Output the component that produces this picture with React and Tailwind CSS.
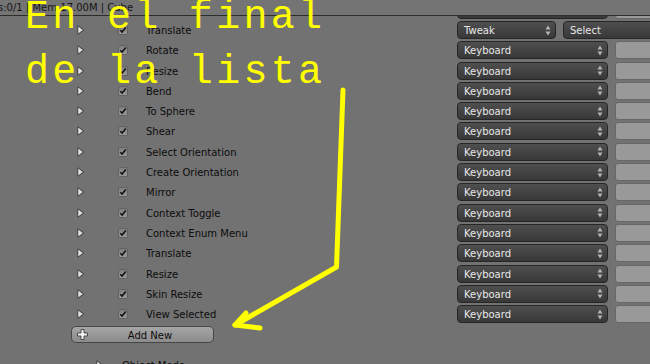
const rows = [
  { label: '', hidden: true },
  { label: 'Translate', tweak: true },
  { label: 'Rotate' },
  { label: 'Resize' },
  { label: 'Bend' },
  { label: 'To Sphere' },
  { label: 'Shear' },
  { label: 'Select Orientation' },
  { label: 'Create Orientation', mark: true },
  { label: 'Mirror' },
  { label: 'Context Toggle' },
  { label: 'Context Enum Menu' },
  { label: 'Translate' },
  { label: 'Resize' },
  { label: 'Skin Resize' },
  { label: 'View Selected' },
]

function Disclosure() {
  return (
    <svg width="8" height="10" viewBox="0 0 8 10" className="shrink-0">
      <defs>
        <linearGradient id="tri" x1="0" x2="1" y1="0" y2="0">
          <stop offset="0" stopColor="#f4f4f4" />
          <stop offset="1" stopColor="#bdbdbd" />
        </linearGradient>
      </defs>
      <polygon points="0.8,0.8 6.8,5 0.8,9.2" fill="url(#tri)" stroke="#3c3c3c" strokeWidth="1" strokeLinejoin="round" />
    </svg>
  )
}

function Checkbox() {
  return (
    <div className="flex h-[10px] w-[10px] shrink-0 items-center justify-center rounded-[2px] border border-[#626262] bg-gradient-to-b from-[#7e7e7e] to-[#999999]">
      <svg width="8" height="8" viewBox="0 0 8 8">
        <path d="M1.3 4.2 L3.1 6.1 L6.8 1.6" fill="none" stroke="#111" strokeWidth="1.5" />
      </svg>
    </div>
  )
}

function UpDown() {
  return (
    <svg width="6" height="11" viewBox="0 0 6 11" className="shrink-0">
      <polygon points="3,0.5 5.5,4.5 0.5,4.5" fill="#b4b4b4" />
      <polygon points="3,10.5 5.5,6.5 0.5,6.5" fill="#b4b4b4" />
    </svg>
  )
}

function Dropdown({ text, width }) {
  return (
    <div
      className={`flex h-[18px] shrink-0 items-center justify-between rounded-[4px] border border-[#262626] bg-gradient-to-b from-[#4f4f4f] to-[#383838] pl-[6px] pr-[4px] text-[10px] text-[#e8e8e8] ${width}`}
    >
      <span className="pt-[1px]">{text}</span>
      <UpDown />
    </div>
  )
}

function Field() {
  return <div className="h-[18px] w-[60px] shrink-0 rounded-[3px] border border-[#676767] bg-[#999999]" />
}

function Row({ row, first }) {
  return (
    <div className={`flex h-[20.3px] shrink-0 items-center ${first ? 'mt-[-16.45px]' : ''}`}>
      <div className="flex w-[457px] shrink-0 items-center pl-[77px]">
        <Disclosure />
        <div className="ml-[33px]">
          <Checkbox />
        </div>
        <span className="ml-[18px] pt-[1px] text-[10px] text-[#0c0c0c]">{row.label}</span>
      </div>
      {row.tweak ? (
        <>
          <Dropdown text="Tweak" width="w-[99px]" />
          <div className="ml-[7px]">
            <Dropdown text="Select" width="w-[150px]" />
          </div>
        </>
      ) : (
        <>
          <Dropdown text="Keyboard" width="w-[151px]" />
          <div className="ml-[7px]">
            <Field />
          </div>
        </>
      )}
    </div>
  )
}

export default function App() {
  return (
    <div className="relative flex h-[364px] w-[650px] flex-col overflow-hidden bg-[#727272] font-['DejaVu_Sans',sans-serif]">
      <div className="flex h-[16px] shrink-0 items-center whitespace-nowrap border-b border-[#2c2c2c] bg-[#747474] text-[10px] text-[#141414]">
        <span className="-ml-[2px]">s:0/1 | Mem:17.00M | Cube</span>
      </div>

      <div className="flex flex-1 flex-col overflow-hidden">
        {rows.map((row, i) => (
          <Row key={i} row={row} first={i === 0} />
        ))}

        <button className="ml-[71px] mt-[1.65px] flex h-[17.3px] w-[143px] shrink-0 items-center rounded-[5px] border border-[#474747] bg-gradient-to-b from-[#a6a6a6] to-[#8b8b8b] text-[10px] text-[#0c0c0c]">
          <svg width="13" height="13" viewBox="0 0 13 13" className="ml-[4px] shrink-0">
            <path
              d="M5 1.5 H8 V5 H11.5 V8 H8 V11.5 H5 V8 H1.5 V5 H5 Z"
              fill="#f2f2f2"
              stroke="#4a4a4a"
              strokeWidth="1"
              strokeLinejoin="round"
            />
          </svg>
          <span className="flex-1 pr-[2px] pt-[1px] text-center">Add New</span>
        </button>

        <div className="mt-[11.5px] flex h-[20.3px] shrink-0 items-center pl-[96px]">
          <Disclosure />
          <span className="ml-[18px] pt-[1px] text-[10px] text-[#0c0c0c]">Object Mode</span>
        </div>
      </div>

      <div className="pointer-events-none absolute left-[25px] top-[-10px] whitespace-pre font-['Liberation_Mono',monospace] text-[40px] leading-[55px] tracking-[3.3px] text-[#ffff00]">
        {'En el final\nde la lista'}
      </div>

      <svg className="pointer-events-none absolute left-0 top-0" width="650" height="364" viewBox="0 0 650 364">
        <polyline
          points="343,90 336.5,267 235,325"
          fill="none"
          stroke="#ffff00"
          strokeWidth="5"
          strokeLinecap="round"
          strokeLinejoin="round"
        />
        <polyline
          points="246,313 235,325 260,328"
          fill="none"
          stroke="#ffff00"
          strokeWidth="5"
          strokeLinecap="round"
          strokeLinejoin="round"
        />
      </svg>
    </div>
  )
}
